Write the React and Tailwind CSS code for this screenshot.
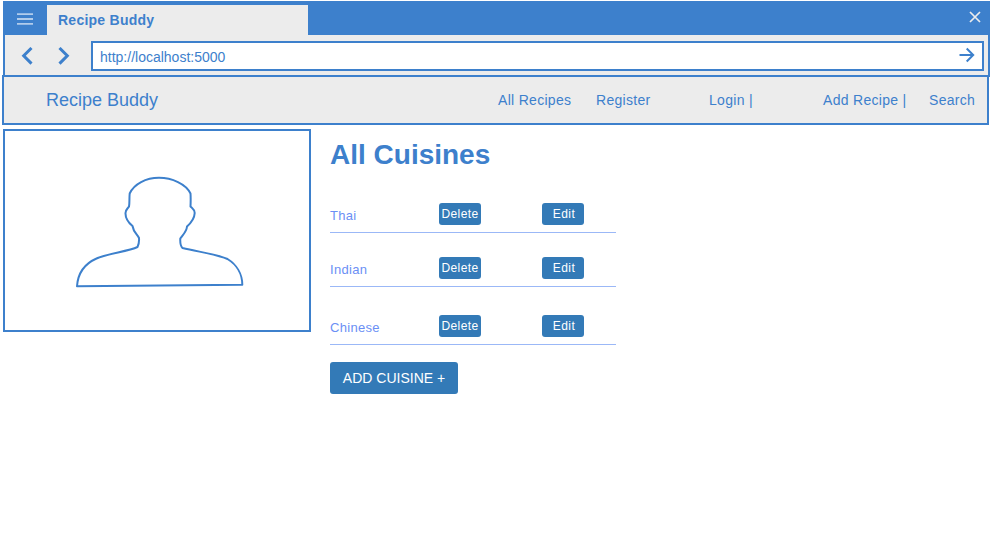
const navLinks = [
  { label: "All Recipes", place: "ml-[340px] w-[98px]" },
  { label: "Register", place: "w-[113px]" },
  { label: "Login |", place: "w-[114px]" },
  { label: "Add Recipe |", place: "w-[106px]" },
  { label: "Search", place: "" },
];

const cuisines = [
  { name: "Thai", row: "h-[35px]" },
  { name: "Indian", row: "mt-[20px] h-[34px]" },
  { name: "Chinese", row: "mt-[24px] h-[34px]" },
];

function BrowserBar() {
  return (
    <header className="ml-[3px] h-[76px] w-[987px] border-2 border-[#3d80cc] bg-[#ececec]">
      <div className="flex h-8 bg-[#3d80cc] pt-[2px]">
        <svg className="ml-[11px] mt-[7px] h-[14px] w-[18px]" viewBox="0 0 18 14" stroke="#b1cceb" strokeWidth="1.8">
          <path d="M1 2.2h16M1 7h16M1 11.8h16" />
        </svg>
        <div className="ml-[13px] h-[30px] w-[261px] bg-[#ececec] pl-[11px] text-[14px] font-bold leading-[31px] tracking-[0.25px]">
          Recipe Buddy
        </div>
        <svg className="ml-auto mr-[7px] mt-[6px] h-3 w-3" viewBox="0 0 12 12" stroke="#ececec" strokeWidth="1.7">
          <path d="M1 1l10 10M11 1L1 11" />
        </svg>
      </div>
      <div className="flex pt-[6px]">
        <svg className="ml-[16px] mt-[6px] h-[18px] w-[12px]" viewBox="0 0 12 18" fill="none" stroke="#3d80cc" strokeWidth="3">
          <path d="M10.5 1L2.7 8.8l7.8 7.8" />
        </svg>
        <svg className="ml-[25px] mt-[6px] h-[18px] w-[12px]" viewBox="0 0 12 18" fill="none" stroke="#3d80cc" strokeWidth="3">
          <path d="M1.5 1l7.8 7.8-7.8 7.8" />
        </svg>
        <div className="ml-[21px] flex h-[30px] w-[893px] items-center justify-between border-2 border-[#3d80cc] bg-white pl-[7px] pr-[7px]">
          <span className="pt-[2px] text-[14px] leading-[18px]">http://localhost:5000</span>
          <svg className="mb-[2px] h-[16px] w-[16px]" viewBox="0 0 16 16" fill="none" stroke="#3d80cc" strokeWidth="2">
            <path d="M.5 8H14M7.7 1.5L14.2 8l-6.5 6.5" />
          </svg>
        </div>
      </div>
    </header>
  );
}

function Portrait() {
  return (
    <div className="h-[203px] w-[308px] border-2 border-[#3d80cc]">
      <svg className="h-full w-full" viewBox="5 131 304 199" fill="none" stroke="#3d80cc" strokeWidth="2" strokeLinejoin="round">
        <path d="M159 177.8C146 177.8 134 184 129.7 193.5C129.2 198 129.7 203 129 206.5C127.5 209 125.5 209.5 125.5 213C125.3 219 129 223 132.5 226C133.3 232 137.5 234.5 139 238C139.3 242 138.5 245 137.5 247C128 251.5 107 253.5 96.5 258.5C83 264.5 77.8 275 77 286.2L242.3 284.8C242.3 274 236.5 264.5 227.5 259C217 254.2 199 252 182.5 248C179.8 245.5 180.2 241 180.3 238.5C182.5 235 186.6 232 187 226.5C192 222 194.5 218 194.7 213C194.5 209 192.5 208.5 190.5 206.5C190.7 202 190.8 198 190.5 193.5C186 184 172 177.8 159 177.8Z" />
      </svg>
    </div>
  );
}

function SmallButton({ children, className }) {
  return (
    <button className={`h-[22px] w-[42px] rounded-[3px] bg-[#337ab7] text-center text-[12px] leading-[22px] text-white ${className}`}>
      {children}
    </button>
  );
}

export default function App() {
  return (
    <div className="h-[553px] w-[994px] overflow-hidden bg-white pt-px font-['Liberation_Sans',Arial,sans-serif] text-[#3d80cc]">
      <BrowserBar />
      <nav className="-mt-[2px] ml-[2px] flex h-[50px] w-[987px] items-center whitespace-nowrap border-2 border-[#3d80cc] bg-[#ececec] pl-[42px]">
        <span className="w-[112px] text-[18px] leading-5">Recipe Buddy</span>
        {navLinks.map((link) => (
          <a key={link.label} className={`shrink-0 pb-px text-[14px] leading-5 tracking-[0.3px] ${link.place}`}>
            {link.label}
          </a>
        ))}
      </nav>
      <main className="ml-[3px] mt-1 flex gap-[19px]">
        <Portrait />
        <section className="w-[286px]">
          <h1 className="mt-[10px] h-[32px] text-[28px] font-bold leading-8">All Cuisines</h1>
          <div className="pt-[27px]">
            {cuisines.map((c) => (
              <div key={c.name} className={`flex items-end border-b border-[#9bb8f7] ${c.row}`}>
                <span className="w-[109px] pb-[8px] text-[13px] leading-4 tracking-[0.3px] text-[#6b8ff5]">{c.name}</span>
                <SmallButton className="mb-[7px] tracking-[0.4px]">Delete</SmallButton>
                <SmallButton className="mb-[7px] ml-[61px] pl-[2px] tracking-[0.4px]">Edit</SmallButton>
              </div>
            ))}
          </div>
          <button className="mt-[17px] h-8 w-[128px] rounded-[3px] bg-[#337ab7] text-[14px] leading-8 text-white">
            ADD CUISINE +
          </button>
        </section>
      </main>
    </div>
  );
}
